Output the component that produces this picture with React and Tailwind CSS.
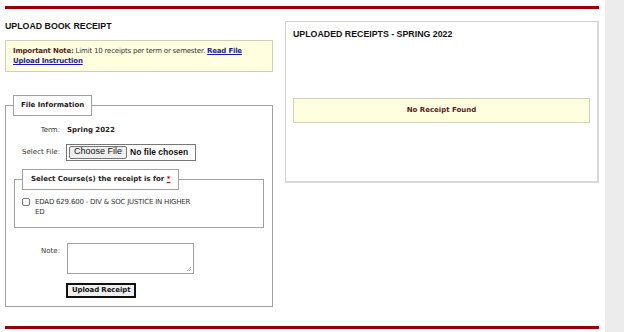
export default function App() {
  const body = { fontFamily: '"DejaVu Sans", Verdana, sans-serif' };
  const head = { fontFamily: '"Liberation Sans", Arial, sans-serif' };
  return (
    <div className="flex w-[624px] h-[332px] bg-white overflow-hidden">
      <div className="w-[605px] h-full pl-[5px] pr-[6px] flex flex-col" style={body}>
        <div className="mt-[6px] h-[3px] bg-[#990000]" />
        <div className="flex gap-[12px] mt-[12px]">
          {/* Left column */}
          <div className="w-[268px] shrink-0">
            <div className="text-[8.8px] leading-[8px] font-bold text-[#111] pt-[1px]" style={head}>
              UPLOAD BOOK RECEIPT
            </div>
            <div className="mt-[10px] h-[32px] border border-[#cfcfbf] bg-[#ffffe0] px-[7px] pt-[5px] text-[7px] leading-[10px] tracking-[-0.2px] text-[#333]">
              <p>
                <span className="font-bold text-[#5a1a1a]">Important Note:</span> Limit 10 receipts per term or semester.{' '}
                <a className="font-bold text-[#1a1aa0] underline">Read File</a>
              </p>
              <p>
                <a className="font-bold text-[#1a1aa0] underline">Upload Instruction</a>
              </p>
            </div>
            <fieldset className="mt-[23px] border border-[#a0a0a0] pl-[8px] pr-[8px] pb-[7px] h-[212px]">
              <legend className="ml-[-1px] border border-[#a0a0a0] bg-white px-[7px] h-[21px] text-[7px] font-bold text-[#222] leading-[19px]">
                File Information
              </legend>
              <div className="grid grid-cols-[46px_1fr] gap-x-[7px] items-center mt-[9px] text-[7px] text-[#333]">
                <div className="text-right">Term:</div>
                <div className="font-bold text-[#222]">Spring 2022</div>
              </div>
              <div className="grid grid-cols-[46px_1fr] gap-x-[6px] items-center mt-[8px] text-[7px] text-[#333]">
                <div className="text-right">Select File:</div>
                <div className="w-[130px] h-[17px] border border-[#767676] flex items-center pl-[2px]">
                  <div className="h-[13px] px-[4px] bg-[#efefef] border border-[#767676] rounded-[2px] flex items-center text-[9px] text-[#111]" style={head}>
                    Choose File
                  </div>
                  <span className="ml-[3px] text-[8.5px] font-bold text-[#111]" style={head}>No file chosen</span>
                </div>
              </div>
              <fieldset className="mt-[8px] border border-[#a0a0a0] pl-[7px] pr-[7px] pb-[8px] h-[59px]">
                <legend className="border border-[#a0a0a0] bg-white px-[8px] h-[21px] text-[7px] font-bold text-[#222] leading-[19px]">
                  Select Course(s) the receipt is for <span className="text-[#cc0000] underline">*</span>
                </legend>
                <label className="flex items-start gap-[5px] mt-[7px] text-[7px] leading-[10px] tracking-[-0.2px] text-[#333]">
                  <span className="mt-[1px] w-[8px] h-[8px] border border-[#767676] rounded-[2px] bg-white shrink-0" />
                  <span className="w-[165px]">EDAD 629.600 - DIV &amp; SOC JUSTICE IN HIGHER ED</span>
                </label>
              </fieldset>
              <div className="grid grid-cols-[46px_1fr] gap-x-[7px] items-start mt-[15px] text-[7px] text-[#333]">
                <div className="text-right mt-[3px]">Note:</div>
                <div className="relative w-[127px] h-[31px] border border-[#a0a0a0] bg-white">
                  <svg className="absolute right-[1px] bottom-[1px]" width="6" height="6" viewBox="0 0 6 6">
                    <path d="M5 1 L1 5 M5 3 L3 5" stroke="#999" strokeWidth="0.8" />
                  </svg>
                </div>
              </div>
              <div className="flex mt-[9px] pl-[52px]">
                <div className="flex items-center h-[15px] px-[4px] border-2 border-[#111] bg-[#efefef] text-[7px] font-bold text-[#111] tracking-[-0.1px]">
                  Upload Receipt
                </div>
              </div>
            </fieldset>
          </div>
          {/* Right column */}
          <div className="flex-1">
            <div className="h-[162px] border border-[#d0d0d0] border-r-[2px] border-b-[2px] border-r-[#d8d8d8] border-b-[#d8d8d8] px-[7px]">
              <div className="mt-[8px] text-[8.8px] leading-[8px] font-bold text-[#111]" style={head}>
                UPLOADED RECEIPTS - SPRING 2022
              </div>
              <div className="mt-[60px] h-[25px] border border-[#d0d0b8] bg-[#ffffe0] flex items-center justify-center text-[7px] font-bold text-[#5a1a1a]">
                No Receipt Found
              </div>
            </div>
          </div>
        </div>
        <div className="mt-auto mb-[3px] h-[3px] bg-[#990000]" />
      </div>
      <div className="flex-1 h-full bg-[#ececec]" />
    </div>
  );
}
